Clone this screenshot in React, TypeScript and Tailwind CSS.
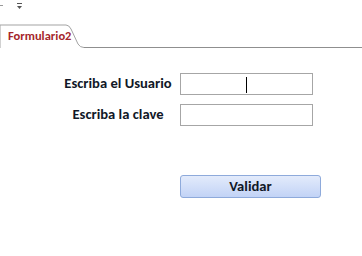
import React from "react";

export default function App() {
  const font = { fontFamily: "Carlito, 'Open Sans', 'Noto Sans', sans-serif" };
  return (
    <div className="w-[362px] h-[256px] bg-white overflow-hidden relative" style={font}>
      {/* quick access toolbar */}
      <div className="h-[22px] flex items-start pl-[0px] pt-[2px] gap-[10px]">
        <svg width="6" height="8" viewBox="0 0 6 8">
          <rect x="0" y="3" width="3" height="1" fill="#9a9a9a" />
        </svg>
        <svg width="8" height="8" viewBox="0 0 8 8" className="mt-[1px]">
          <rect x="1" y="0" width="5" height="1" fill="#555" />
          <path d="M1 3 H6 L3.5 6 Z" fill="#555" />
        </svg>
      </div>
      {/* tab strip */}
      <div className="flex items-end h-[26px]">
        <div className="relative w-[84px] h-[25px] flex items-center">
          <svg className="absolute inset-0" width="84" height="25" viewBox="0 0 84 25">
            <path d="M0 25 V2 H66 Q69 2 71 6 L78 21 Q80 24.5 84 24.5" fill="white" stroke="#a3a3a3" strokeWidth="1" />
          </svg>
          <span className="relative pl-[8px] pt-[1px] text-[12.5px] font-bold text-[#a5262b] leading-none">
            Formulario2
          </span>
        </div>
        <div className="flex-1 h-px bg-[#8f8f8f] mb-[0.5px]" />
      </div>
      {/* form */}
      <div className="flex flex-col gap-[9px] pt-[25px]">
        <div className="flex items-center">
          <div className="w-[180px] pl-[60px] pr-[4px] text-center text-[14.6px] font-bold text-[#111827]">
            Escriba el Usuario
          </div>
          <div className="w-[133px] h-[22px] border border-[#a6a6a6] relative">
            <div className="absolute left-[65px] top-[3px] w-px h-[16px] bg-black" />
          </div>
        </div>
        <div className="flex items-center">
          <div className="w-[180px] pl-[60px] pr-[4px] text-center text-[14.6px] font-bold text-[#111827]">
            Escriba la clave
          </div>
          <div className="w-[133px] h-[22px] border border-[#a6a6a6]" />
        </div>
      </div>
      <div className="pl-[180px] pt-[49px]">
        <div className="w-[141px] h-[23px] rounded-[3px] border border-[#8eaadb] bg-gradient-to-b from-[#e3ebfb] to-[#c2d3f6] flex items-center justify-center text-[14.6px] font-bold text-[#111827]">
          Validar
        </div>
      </div>
    </div>
  );
}
